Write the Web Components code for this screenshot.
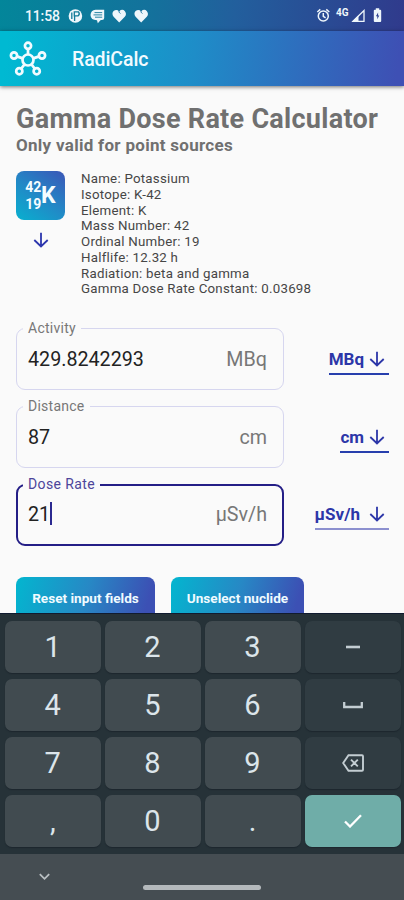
<!DOCTYPE html>
<html lang="en"><head><meta charset="utf-8"><title>RadiCalc</title>
<style>html,body{margin:0;height:900px;overflow:hidden;background:#fafafa}body{font-family:Roboto,"Liberation Sans",sans-serif}</style></head>
<body><radi-app></radi-app>
<script>
const define=(name,render)=>customElements.define(name,class extends HTMLElement{
  connectedCallback(){
    if(this.shadowRoot)return;
    this.attachShadow({mode:'open'}).innerHTML=render(this);
  }
});

define('down-arrow',()=>`<style>:host{display:block;width:16px;height:16px}svg{display:block}</style>
<svg width="16" height="16" viewBox="0 0 16 16" fill="none" stroke="currentColor" stroke-width="1.8"><path d="M8 .8V14.4M1.300 8 8 14.400 14.700 8"/></svg>`);

define('status-bar',()=>`<style>
:host{display:flex;align-items:center;height:31px;box-sizing:border-box;padding:1px 20px 0 25px;color:#eef6fb;background:linear-gradient(97deg,#03869a 0%,#14719c 38%,#225f9d 58%,#303a8c 100%)}
.t{font-size:14px;font-weight:500;letter-spacing:-.15px;width:43px}
svg{display:block;flex:none}
</style><span class="t">11:58</span>
<svg width="110" height="20" viewBox="68 6 110 20" fill="currentColor">
<circle cx="75.400" cy="16" r="6.800"/><path d="M74.300 11.800h4.200q1.700 2.200-.3 4h-3.900zM71.800 12.500v6.500M74.600 16v5" stroke="#117b98" stroke-width="1.300" fill="none"/>
<path d="M95.500 9.800h8.700v8.200q0 2-2.200 2h-1.200l-3 3.300-.8-3q-6.300 0-6.500-5.200.3-4.800 5-5.300z"/><path d="M94.500 12.600h7.700M93.500 14.900h8.700M95 17.200h7.200" stroke="#147798" stroke-width=".9" fill="none"/>
<path d="M119.200 22.500l-5.600-5.700q-2.300-3 0-5.700 2.700-2.500 5.600.2 3.100-2.800 5.700-.1 2.200 2.800-.1 5.600z"/><path d="M119 9.500v2.600l1.400 1.500" stroke="#1773a0" fill="none" stroke-width=".9"/>
<path d="M141.200 22.500l-5.600-5.700q-2.300-3 0-5.700 2.700-2.500 5.600.2 3.100-2.800 5.700-.1 2.200 2.800-.1 5.600z"/><path d="M141 9.500v2.600l1.400 1.500" stroke="#196fa0" fill="none" stroke-width=".9"/>
</svg><span style="flex:1"></span>
<svg width="16" height="18" viewBox="315 7 16 18" fill="none" stroke="currentColor" stroke-width="1.500"><circle cx="323.300" cy="16" r="5"/><path d="M323.300 13v3.400l2.300 1.500M317.300 12l3-2.600M329.300 12l-3-2.600"/></svg>
<span style="font-size:10px;font-weight:700;line-height:12px;margin:-6px 2px 0 5px;width:13px">4G</span>
<svg width="33" height="18" viewBox="351 7 33 18" fill="currentColor"><path d="M353 21.300 364 10.500v10.800z" fill="none" stroke="currentColor" stroke-width="1.300"/><path d="M352 21.700l6.500-6.400v6.400z"/><path fill-rule="evenodd" d="M374.800 9.800h1v-1.500h3.400v1.500h1q1 0 1 1v10.300q0 1-1 1h-5.400q-1 0-1-1V10.800q0-1 1-1zM378.100 12.500l-2.200 3.800h1.400v3l2-3.800h-1.200z"/></svg>`);

define('app-bar',()=>`<style>
:host{display:flex;align-items:center;height:55px;padding-left:8px;background:linear-gradient(97deg,#00b9d2 2%,#1e8dc8 48%,#3e50b4 98%);color:#f2fbff;box-shadow:0 1px 4px rgba(0,0,0,.55);position:relative}
.n{font-size:19.500px;font-weight:500;margin:1px 0 0 24px;letter-spacing:-.1px}
</style><svg width="40" height="40" viewBox="8 38 40 40" fill="none" stroke="currentColor" stroke-width="2.700">
<circle cx="28" cy="59" r="5.500"/><circle cx="28" cy="44.800" r="3.100"/><circle cx="14" cy="54.500" r="3.100"/><circle cx="42" cy="54.500" r="3.100"/><circle cx="19.300" cy="70.200" r="3.100"/><circle cx="36.700" cy="70.200" r="3.100"/><path d="M28 47.500v6M16.800 55.400l6 2M39.200 55.400l-6 2M21 68l3.500-4.600M35 68l-3.500-4.600"/></svg>
<span class="n"><slot></slot></span>`);

define('nuclide-info',()=>`<style>
:host{display:grid;grid-template-columns:49px 1fr;column-gap:16px;margin-top:14px;height:130px}
.l{display:flex;flex-direction:column;align-items:center;color:#2c36ad;gap:12px}
.tile{width:49px;height:49px;border-radius:8px;background:linear-gradient(35deg,#08b0cf,#2387c6 50%,#3b56b7);display:flex;align-items:center;justify-content:center;color:#f4fcff;font-weight:700}
.num{display:flex;flex-direction:column;font-size:14px;line-height:17px;text-align:right;letter-spacing:-.2px}
.k{font-size:23px}
.r{font-size:13.300px;line-height:15.780px;letter-spacing:.24px;color:#464646;white-space:nowrap}
</style><div class="l"><div class="tile"><div class="num"><span>42</span><span>19</span></div><span class="k">K</span></div><down-arrow></down-arrow></div>
<div class="r"><div>Name: Potassium</div><div>Isotope: K-42</div><div>Element: K</div><div>Mass Number: 42</div><div>Ordinal Number: 19</div><div>Halflife: 12.32 h</div><div>Radiation: beta and gamma</div><div>Gamma Dose Rate Constant: 0.03698</div></div>`);

define('value-field',e=>{const on=e.hasAttribute('active');return `<style>
:host{display:flex;justify-content:space-between;height:62px;align-items:center}
fieldset{box-sizing:border-box;width:268px;height:69px;margin:-7px 0 0;padding:0 ${on?15:16}px 2px ${on?5:6}px;border:${on?'2px solid #241e86':'1.500px solid #d6d6ef'};border-radius:9px;display:block;min-width:0}
legend{font-size:14px;line-height:15px;height:15px;padding:0 5px;color:${on?'#4d459a':'#777'};letter-spacing:${on?.4:.25}px}
.v{display:flex;justify-content:space-between;align-items:center;font-size:19.700px;line-height:24px;margin:${on?10:12}px 0 0 5px;color:#222}
.u{color:#777}.c{display:inline-block;width:2px;height:23px;background:#2b2990;vertical-align:-4px;margin-left:0}
.d{display:flex;align-items:center;gap:${on?9:5}px;border-bottom:2px solid ${on?'#8c90cf':'#273fad'};color:#2c36a8;font-size:17px;font-weight:700;height:28px;padding:0 4px 2px 0;box-sizing:border-box;margin-top:${on?2:3}px}
</style><fieldset><legend>${e.getAttribute('label')}</legend><div class="v"><span>${e.getAttribute('value')}${on?'<i class="c"></i>':''}</span><span class="u">${e.getAttribute('unit')}</span></div></fieldset>
<div class="d"><span>${e.getAttribute('unit')}</span><down-arrow></down-arrow></div>`});

define('action-button',()=>`<style>:host{display:block;box-sizing:border-box;height:44px;border-radius:8px;font-size:13.600px;line-height:43px;text-align:center;font-weight:700;color:#f0fbff;background:linear-gradient(105deg,#04b4cf 2%,#2788c5 50%,#3c50b4 92%);white-space:nowrap}</style><slot></slot>`);

define('calc-form',()=>`<style>
:host{display:block;height:527px;box-sizing:border-box;padding:18px 15px 0 16px;overflow:hidden;color:#707070;background:#fafafa}
h1{margin:0;font-size:27px;line-height:30px;font-weight:700;letter-spacing:.28px;white-space:nowrap}
h2{margin:0;font-size:17px;line-height:23px;font-weight:700;letter-spacing:.29px;white-space:nowrap}
.f{display:grid;gap:16px;margin-top:27px}
.b{display:flex;gap:16px;margin-top:31px}
</style><h1>Gamma Dose Rate Calculator</h1><h2>Only valid for point sources</h2>
<nuclide-info></nuclide-info>
<div class="f"><value-field label="Activity" value="429.8242293" unit="MBq"></value-field><value-field label="Distance" value="87" unit="cm"></value-field><value-field active label="Dose Rate" value="21" unit="µSv/h"></value-field></div>
<div class="b"><action-button style="width:139px">Reset input fields</action-button><action-button style="width:133px">Unselect nuclide</action-button></div>`);

define('key-cap',e=>`<style>
:host{display:flex;align-items:center;justify-content:center;border-radius:7px;background:${e.hasAttribute('enter')?'#6fada8':e.hasAttribute('fn')?'#303c42':'#414b50'};color:#dce5ea;font-size:29px;line-height:34px;box-shadow:0 1px 1px rgba(20,28,36,.5)}
</style><slot></slot>`);

define('num-pad',()=>`<style>
:host{display:grid;grid-template-columns:95.500px 96px 96px 96px;grid-template-rows:repeat(4,52.500px);column-gap:4px;row-gap:5.500px;height:241px;box-sizing:border-box;padding:6.500px 3px 0 5px;background:#263238;border-top:1.500px solid #111b30}
svg{display:block;fill:none;stroke:#c3cdd2}
</style><key-cap>1</key-cap><key-cap>2</key-cap><key-cap>3</key-cap><key-cap fn><svg width="14" height="4"><path d="M0 2h14" stroke-width="2.600"/></svg></key-cap>
<key-cap>4</key-cap><key-cap>5</key-cap><key-cap>6</key-cap><key-cap fn><svg width="20" height="8"><path d="M1.200 1v5h17.600V1" stroke-width="2.300"/></svg></key-cap>
<key-cap>7</key-cap><key-cap>8</key-cap><key-cap>9</key-cap><key-cap fn><svg width="22" height="18" viewBox="0 0 22 18" stroke-width="1.900"><path d="M6.500 1.200H20q1 0 1 1v13.600q0 1-1 1H6.500L1.200 9zM9 5.600l6.800 6.800M15.800 5.600 9 12.400"/></svg></key-cap>
<key-cap>,</key-cap><key-cap>0</key-cap><key-cap>.</key-cap><key-cap enter><svg width="18" height="14" viewBox="0 0 18 14"><path d="M1 7.500 6 12.500 17 1.200" style="stroke:#fff" stroke-width="2.300"/></svg></key-cap>`);

define('nav-bar',()=>`<style>
:host{display:grid;grid-template-columns:1fr 118px 1fr;height:46px;background:#454d52;box-sizing:border-box}
svg{display:block;margin:19px 0 0 39px;fill:none;stroke:#b9bfc2;stroke-width:1.800}
i{height:5px;border-radius:3px;background:#b4b9bc;margin-top:31px}
</style><svg width="11" height="8"><path d="M.8 1.200 5.500 5.800 10.200 1.200"/></svg><i></i><span></span>`);

define('radi-app',()=>`<style>:host{display:flex;flex-direction:column;width:404px;height:900px;overflow:hidden}</style>
<status-bar></status-bar><app-bar>RadiCalc</app-bar><calc-form></calc-form><num-pad></num-pad><nav-bar></nav-bar>`);
</script></body></html>
